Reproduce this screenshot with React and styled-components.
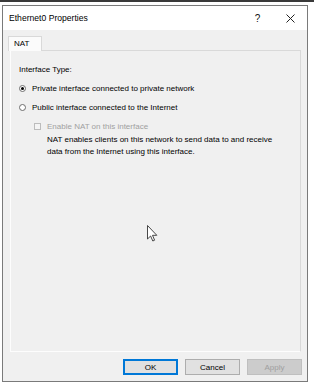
import React from "react";
import styled, { createGlobalStyle } from "styled-components";

const GlobalStyle = createGlobalStyle`
  html, body {
    margin: 0;
    padding: 0;
    background: #ffffff;
  }
  * {
    box-sizing: border-box;
  }
`;

const Desktop = styled.div`
  position: relative;
  width: 314px;
  height: 385px;
  overflow: hidden;
  background: #ffffff;
  border-top: 2px solid #3a3a3a;
  padding: 3px 0 0 2px;
  font-family: "Liberation Sans", Arial, sans-serif;
`;

const Dialog = styled.div`
  width: 306px;
  height: 377px;
  border: 1px solid #7a7a7a;
  background: #f0f0f0;
  display: flex;
  flex-direction: column;
`;

const TitleBar = styled.div`
  height: 24px;
  background: #ffffff;
  display: flex;
  align-items: center;
  padding-left: 6px;
`;

const Title = styled.div`
  flex: 1;
  font-size: 8.6px;
  color: #000;
`;

const TitleButton = styled.div`
  width: 33px;
  height: 24px;
  display: flex;
  align-items: center;
  justify-content: center;
  font-size: 10px;
  color: #111;
`;

const Body = styled.div`
  flex: 1;
  display: flex;
  flex-direction: column;
  padding: 6px 5px 0 5px;
`;

const TabStrip = styled.div`
  height: 14px;
  display: flex;
  align-items: flex-end;
`;

const Tab = styled.div`
  width: 34px;
  height: 15px;
  margin-bottom: -1px;
  background: #fbfbfb;
  border: 1px solid #d9d9d9;
  border-bottom: none;
  font-size: 8px;
  padding: 2px 0 0 5px;
  position: relative;
  z-index: 1;
`;

const Panel = styled.div`
  height: 302px;
  margin-left: 2px;
  margin-right: 1px;
  border: 1px solid #d9d9d9;
  border-left-color: #fdfdfd;
  border-bottom-color: #fdfdfd;
  background: #f0f0f0;
  padding: 13px 0 0 8px;
  font-size: 8px;
  color: #000;
`;

const Label = styled.div`
  height: 12px;
  line-height: 12px;
  margin-bottom: 6px;
`;

const OptionRow = styled.div`
  display: flex;
  align-items: center;
  gap: ${(p) => p.$gap || 6}px;
  height: 12px;
  margin-left: ${(p) => p.$indent || 0}px;
  margin-bottom: 7px;
  color: ${(p) => (p.$disabled ? "#a0a0a0" : "#000")};
`;

const Radio = styled.span`
  width: 7px;
  height: 7px;
  border-radius: 50%;
  border: 1px solid #6d6d6d;
  background: #fff;
  display: flex;
  align-items: center;
  justify-content: center;
  &::after {
    content: "";
    width: 3px;
    height: 3px;
    border-radius: 50%;
    background: ${(p) => (p.$checked ? "#000" : "transparent")};
  }
`;

const Check = styled.span`
  width: 7px;
  height: 7px;
  border: 1px solid #bcbcbc;
  background: #f4f4f4;
`;

const Description = styled.div`
  margin-left: 28px;
  margin-top: -5px;
  line-height: 12px;
  width: 234px;
`;

const ButtonRow = styled.div`
  display: flex;
  justify-content: flex-end;
  gap: 7px;
  padding: 7px 0 0 0;
`;

const Button = styled.div`
  width: 55px;
  height: 16px;
  display: flex;
  align-items: center;
  justify-content: center;
  font-size: 8px;
  background: ${(p) => (p.$disabled ? "#cccccc" : "#e1e1e1")};
  color: ${(p) => (p.$disabled ? "#a0a0a0" : "#000")};
  border: 1px solid
    ${(p) => (p.$primary ? "#0078d7" : p.$disabled ? "#bfbfbf" : "#adadad")};
  box-shadow: ${(p) => (p.$primary ? "inset 0 0 0 1px #0078d7" : "none")};
`;

const Cursor = styled.svg`
  position: absolute;
  left: 147px;
  top: 223px;
`;

function CloseIcon() {
  return (
    <svg width="9" height="9" viewBox="0 0 9 9">
      <path d="M0.5 0.5 L8.5 8.5 M8.5 0.5 L0.5 8.5" stroke="#222" strokeWidth="1" />
    </svg>
  );
}

export default function App() {
  return (
    <>
      <GlobalStyle />
      <Desktop>
        <Dialog>
          <TitleBar>
            <Title>Ethernet0 Properties</Title>
            <TitleButton>?</TitleButton>
            <TitleButton>
              <CloseIcon />
            </TitleButton>
          </TitleBar>
          <Body>
            <TabStrip>
              <Tab>NAT</Tab>
            </TabStrip>
            <Panel>
              <Label>Interface Type:</Label>
              <OptionRow>
                <Radio $checked />
                Private interface connected to private network
              </OptionRow>
              <OptionRow>
                <Radio />
                Public interface connected to the Internet
              </OptionRow>
              <OptionRow $indent={15} $disabled>
                <Check />
                Enable NAT on this interface
              </OptionRow>
              <Description>
                NAT enables clients on this network to send data to and receive
                data from the Internet using this interface.
              </Description>
            </Panel>
            <ButtonRow>
              <Button $primary>OK</Button>
              <Button>Cancel</Button>
              <Button $disabled>Apply</Button>
            </ButtonRow>
          </Body>
        </Dialog>
        <Cursor width="11" height="17" viewBox="0 0 11 17">
          <path
            d="M0.5 0.5 L0.5 14 L3.6 11 L5.8 16 L7.6 15.2 L5.5 10.3 L9.8 10.3 Z"
            fill="#fff"
            stroke="#333"
            strokeWidth="0.9"
          />
        </Cursor>
      </Desktop>
    </>
  );
}
